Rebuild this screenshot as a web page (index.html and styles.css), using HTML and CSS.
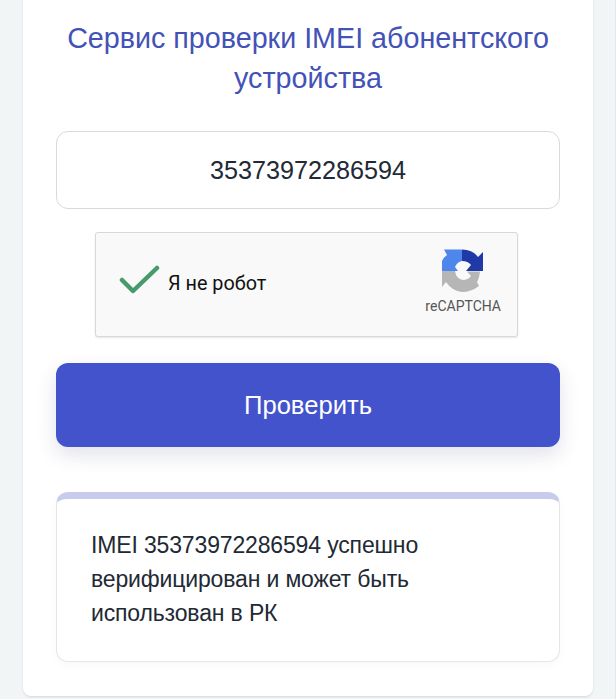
FILE: index.html
```html
<!DOCTYPE html>
<html lang="ru">
<head>
  <meta charset="UTF-8">
  <title>Сервис проверки IMEI</title>
  <link rel="stylesheet" href="styles.css">
</head>
<body>

  <main class="card">
    <h1 class="title">Сервис проверки IMEI абонентского устройства</h1>

    <div class="imei-input">35373972286594</div>

    <div class="captcha">
      <svg class="captcha-check" width="42" height="32" viewBox="0 0 42 32">
        <path d="M3 16 L14 27 L38 4" fill="none" stroke="#459b6c" stroke-width="4.5" stroke-linecap="round" stroke-linejoin="round"/>
      </svg>
      <span class="captcha-label">Я не робот</span>
      <div class="captcha-brand">
        <svg width="44" height="44" viewBox="0 0 44 44">
          <path d="M1 22 V12 Q3 8 6 6 L3 0.5 H21 V12 Q16 13 14 18 L17 22 Z" fill="#4f86ec"/>
          <path d="M21 0.5 Q32 1 37 8 L42 3 V22 H25 L30 16 Q27 12 21 12 Z" fill="#1f3aa6"/>
          <path d="M1 22 H14 Q15 30 22 31 Q27 31 30 27 L26 22.5 H39 Q38 30 36 33 L38 37 Q30 43 21 43 Q11 42 5 33 L1 38 Z" fill="#b6b6b6"/>
        </svg>
        <span class="captcha-name">reCAPTCHA</span>
      </div>
    </div>

    <button class="submit-btn">Проверить</button>

    <div class="result">
      <p class="result-text">IMEI 35373972286594 успешно верифицирован и может быть использован в РК</p>
    </div>
  </main>

</body>
</html>
```

FILE: styles.css
```css
html, body {
  height: 100%;
}
body {
  margin: 0;
  height: 699px;
  overflow: hidden;
  background-color: #f1f5f6;
  border-right: 1px solid #e4e8ea;
  font-family: 'Liberation Sans', Arial, sans-serif;
  padding: 0 22px 3px 23px;
  box-sizing: border-box;
}
.card {
  height: 696px;
  box-sizing: border-box;
  background-color: #fff;
  border-radius: 0 0 8px 8px;
  box-shadow: 0 1px 2px rgba(120, 135, 150, 0.25);
  padding: 18px 33px 0;
}
.title {
  margin: 0 0 33px;
  font-size: 28.7px;
  font-weight: normal;
  line-height: 40px;
  color: #4352b7;
  text-align: center;
}
.imei-input {
  height: 78px;
  box-sizing: border-box;
  border: 1.5px solid #d9d9d9;
  border-radius: 12px;
  display: flex;
  align-items: center;
  justify-content: center;
  font-size: 25.2px;
  color: #212934;
}
.captcha {
  width: 423px;
  height: 105px;
  box-sizing: border-box;
  margin: 23px 0 26px 39px;
  background-color: #f9f9f9;
  border: 1.5px solid #d8d8d8;
  border-radius: 3px;
  box-shadow: 0 1px 2px rgba(0, 0, 0, 0.1);
  display: flex;
  align-items: center;
  padding: 0 16px 0 23px;
}
.captcha-check {
  margin-right: 7px;
  margin-bottom: 10px;
}
.captcha-label {
  font-family: Roboto, 'Liberation Sans', sans-serif;
  font-size: 19.8px;
  color: #111;
  margin-bottom: 2px;
}
.captcha-brand {
  margin-left: auto;
  margin-bottom: 7px;
  display: flex;
  flex-direction: column;
  align-items: center;
  gap: 5px;
}
.captcha-name {
  font-family: Roboto, 'Liberation Sans', sans-serif;
  font-size: 14px;
  color: #555;
}
.submit-btn {
  display: block;
  width: 100%;
  height: 84px;
  border: none;
  border-radius: 12px;
  background-color: #4353cc;
  color: #fff;
  font-family: 'Liberation Sans', Arial, sans-serif;
  font-size: 25.6px;
  box-shadow: 0 8px 20px rgba(40, 50, 100, 0.14);
}
.result {
  height: 170px;
  box-sizing: border-box;
  margin-top: 45px;
  border: 1.5px solid #e6e6ea;
  border-top: 7px solid #c9cbec;
  border-radius: 12px;
  box-shadow: 0 3px 10px rgba(0, 0, 0, 0.03);
  padding: 29px 33px 0 34px;
}
.result-text {
  margin: 0;
  font-size: 23px;
  letter-spacing: -0.15px;
  line-height: 34px;
  color: #212934;
}
```
